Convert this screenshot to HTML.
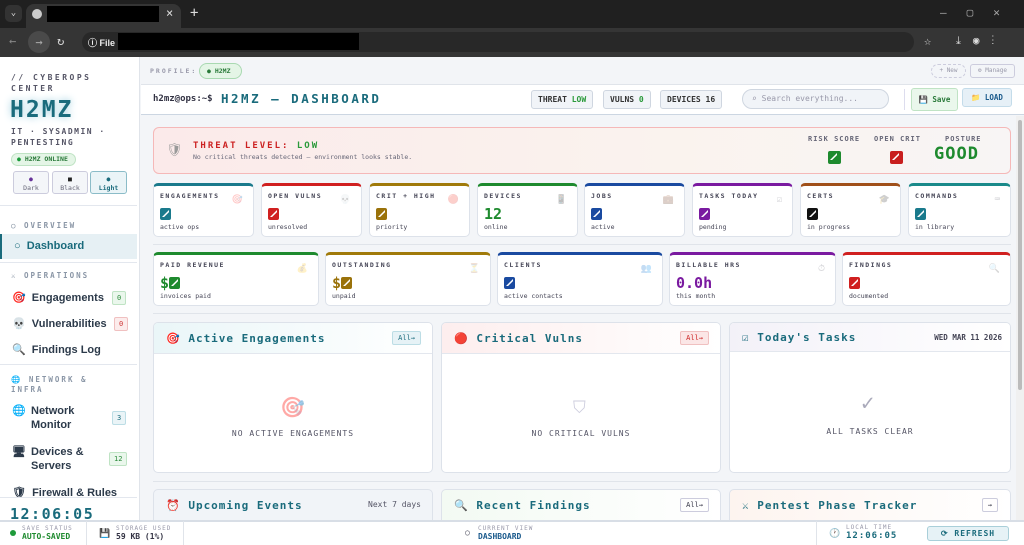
<!DOCTYPE html><html><head><meta charset="utf-8"><style>
*{box-sizing:border-box;margin:0;padding:0}
body{width:1024px;height:545px;overflow:hidden;background:#f3f5f8;font-family:"DejaVu Sans Mono","Liberation Mono",monospace;color:#334;position:relative}
.a{position:absolute}
.hd{font-family:"DejaVu Sans Mono",monospace;font-weight:bold;color:#1a6b7c;letter-spacing:1px}
.card{position:absolute;background:#fff;border:1px solid #dde2ea;border-radius:5px;border-top:3px solid}
.lbl{position:absolute;left:6px;top:6px;font-size:6.5px;letter-spacing:1.5px;color:#445;font-weight:bold}
.val{position:absolute;left:6px;top:19px;font-size:15px;font-weight:bold}
.sub{position:absolute;left:6px;top:37px;font-size:6.5px;color:#445}
.ic{position:absolute;right:10px;top:9px;font-size:9px;opacity:.25}
.box{display:inline-block;width:11px;height:12px;border-radius:2px;position:relative;top:1px}
.box:after{content:"";position:absolute;left:2px;top:2px;width:7px;height:7px;background:#fff;clip-path:polygon(0 100%,100% 0,100% 30%,30% 100%)}
.pill{position:absolute;border:1px solid #cfd6e0;border-radius:3px;background:#f1f4f8;font-size:8px;font-weight:bold;color:#333;padding:4px 6px}
.nav{position:absolute;left:0;width:138px;font-family:"Liberation Sans",sans-serif;font-weight:bold;font-size:11px;color:#2c3a4a}
.sec{position:absolute;left:11px;font-size:7.5px;letter-spacing:2px;color:#8a96a6;font-weight:bold}
.bdg{position:absolute;right:12px;font-size:7px;padding:2px 4px;border-radius:2px;border:1px solid}
.pan{position:absolute;background:#fff;border:1px solid #dde2ea;border-radius:5px;overflow:hidden}
.ph{height:31px;border-bottom:1px solid #e3e7ee;position:relative}
.pt{position:absolute;left:12px;top:9px;font-size:11px}
.emp{position:absolute;width:100%;text-align:center;font-size:8px;letter-spacing:1px;color:#556}
</style></head><body>
<!-- chrome -->
<div class="a" style="left:0;top:0;width:1024px;height:28px;background:#202020"></div>
<div class="a" style="left:5px;top:5px;width:17px;height:17px;background:#333;border-radius:5px;color:#ddd;font-size:9px;text-align:center;line-height:17px">⌄</div>
<div class="a" style="left:26px;top:4px;width:155px;height:24px;background:#353535;border-radius:8px 8px 0 0"></div>
<div class="a" style="left:32px;top:9px;width:10px;height:10px;border-radius:50%;background:#ccc"></div>
<div class="a" style="left:47px;top:6px;width:112px;height:16px;background:#000"></div>
<div class="a" style="left:166px;top:6px;color:#ddd;font-size:12px">×</div>
<div class="a" style="left:190px;top:5px;color:#ddd;font-size:14px">+</div>
<div class="a" style="left:940px;top:6px;color:#aaa;font-size:11px;letter-spacing:20px">–▢✕</div>
<div class="a" style="left:0;top:28px;width:1024px;height:29px;background:#353535"></div>
<div class="a" style="left:9px;top:34px;color:#888;font-size:12px">←</div>
<div class="a" style="left:28px;top:31px;width:22px;height:22px;border-radius:50%;background:#4a4a4a;color:#aaa;font-size:12px;text-align:center;line-height:22px">→</div>
<div class="a" style="left:57px;top:34px;color:#ddd;font-size:12px">↻</div>
<div class="a" style="left:82px;top:32px;width:832px;height:20px;border-radius:10px;background:#282828"></div>
<div class="a" style="left:88px;top:36px;color:#eee;font-size:9px;font-family:'Liberation Sans';font-weight:bold">ⓘ File</div>
<div class="a" style="left:118px;top:33px;width:241px;height:17px;background:#000"></div>
<div class="a" style="left:924px;top:34px;color:#ddd;font-size:12px">☆</div>
<div class="a" style="left:956px;top:34px;color:#ddd;font-size:11px;letter-spacing:12px">⤓◉⋮</div>
<!-- sidebar -->
<div class="a" style="left:0;top:57px;width:140px;height:463px;background:#fff;border-right:1px solid #e0e4ea"></div>
<div class="a" style="left:11px;top:72px;font-size:8px;letter-spacing:2.5px;font-weight:bold;color:#556;line-height:11px">// CYBEROPS<br>CENTER</div>
<div class="a hd" style="left:10px;top:97px;font-size:23px;letter-spacing:2px;text-shadow:0 0 8px #9cd">H2MZ</div>
<div class="a" style="left:11px;top:126px;font-size:8px;letter-spacing:1.5px;font-weight:bold;color:#556;line-height:11px">IT · SYSADMIN ·<br>PENTESTING</div>
<div class="a" style="left:11px;top:153px;width:65px;height:13px;border-radius:7px;background:#e4f5e6;border:1px solid #bfe3c4;font-size:6.5px;font-weight:bold;color:#2a7a3a;line-height:11px;padding-left:5px"><span style="color:#1a9a3a">●</span> H2MZ ONLINE</div>
<div class="a" style="left:13px;top:171px;width:36px;height:23px;border:1px solid #ccd;border-radius:3px;background:#f4f6f9;font-size:6.5px;color:#667;text-align:center;line-height:9px;padding-top:3px"><span style="color:#639">●</span><br>Dark</div>
<div class="a" style="left:52px;top:171px;width:36px;height:23px;border:1px solid #ccd;border-radius:3px;background:#f4f6f9;font-size:6.5px;color:#667;text-align:center;line-height:9px;padding-top:3px"><span style="color:#222">■</span><br>Black</div>
<div class="a" style="left:90px;top:171px;width:37px;height:23px;border:1px solid #8bbcc8;border-radius:3px;background:#eaf4f7;font-size:6.5px;color:#1a6b7c;font-weight:bold;text-align:center;line-height:9px;padding-top:3px">●<br>Light</div>
<div class="a" style="left:0;top:205px;width:137px;border-top:1px solid #e3e7ee"></div>
<div class="sec" style="top:221px">○ OVERVIEW</div>
<div class="a" style="left:0;top:234px;width:137px;height:25px;background:#e6f0f4;border-left:2px solid #1a6b7c"></div>
<div class="nav" style="top:240px;left:14px;color:#1a6b7c">○ &nbsp;Dashboard</div>
<div class="a" style="left:0;top:262px;width:137px;border-top:1px solid #e3e7ee"></div>
<div class="sec" style="top:271px">⚔ OPERATIONS</div>
<div class="nav" style="top:291px;left:12px">🎯 &nbsp;Engagements</div><div class="bdg" style="top:291px;left:112px;right:auto;color:#2a8a3a;background:#eaf7ec;border-color:#bfe3c4">0</div>
<div class="nav" style="top:317px;left:12px">💀 &nbsp;Vulnerabilities</div><div class="bdg" style="top:317px;left:114px;right:auto;color:#c33;background:#fcecec;border-color:#f0c0c0">0</div>
<div class="nav" style="top:343px;left:12px">🔍 &nbsp;Findings Log</div>
<div class="a" style="left:0;top:364px;width:137px;border-top:1px solid #e3e7ee"></div>
<div class="sec" style="top:375px;line-height:10px">🌐 NETWORK &amp;<br>INFRA</div>
<div class="nav" style="top:404px;left:12px;line-height:14px">🌐&nbsp;<span style="position:absolute;left:19px">Network<br>Monitor</span></div><div class="bdg" style="top:411px;left:112px;right:auto;color:#1a6b7c;background:#eaf4f7;border-color:#bcdde5">3</div>
<div class="nav" style="top:445px;left:12px;line-height:14px">🖥<span style="position:absolute;left:19px">Devices &amp;<br>Servers</span></div><div class="bdg" style="top:452px;left:109px;right:auto;color:#2a8a3a;background:#eaf7ec;border-color:#bfe3c4">12</div>
<div class="nav" style="top:486px;left:12px">🛡 &nbsp;Firewall &amp; Rules</div>
<div class="a" style="left:0;top:497px;width:137px;height:23px;background:#fff;border-top:1px solid #e3e7ee"></div>
<div class="a hd" style="left:10px;top:505px;font-size:15px;letter-spacing:1.5px">12:06:05</div>
<!-- main top -->
<div class="a" style="left:141px;top:57px;width:883px;height:28px;background:#f3f5f8;border-bottom:1px solid #e0e4ea"></div>
<div class="a" style="left:150px;top:67px;font-size:6.5px;letter-spacing:2px;color:#99a;font-weight:bold">PROFILE:</div>
<div class="a" style="left:199px;top:63px;width:43px;height:16px;border-radius:8px;background:#e4f5e6;border:1px solid #a9d9b1;font-size:6.5px;color:#2a7a3a;font-weight:bold;line-height:14px;padding-left:7px">● H2MZ</div>
<div class="a" style="left:931px;top:64px;width:35px;height:14px;border:1px dashed #ccd;border-radius:7px;font-size:6px;color:#99a;text-align:center;line-height:12px">+ New</div>
<div class="a" style="left:970px;top:64px;width:45px;height:14px;border:1px solid #ccd;border-radius:3px;font-size:6px;color:#99a;text-align:center;line-height:12px">⚙ Manage</div>
<div class="a" style="left:141px;top:85px;width:883px;height:30px;background:#fff;border-bottom:1px solid #ccd6e2"></div>
<div class="a" style="left:153px;top:94px;font-size:9px;font-weight:bold;color:#334">h2mz@ops:~$</div>
<div class="a hd" style="left:221px;top:91px;font-size:12.5px;letter-spacing:2.5px">H2MZ — DASHBOARD</div>
<div class="pill" style="left:531px;top:90px">THREAT <span style="color:#2a9a3a">LOW</span></div>
<div class="pill" style="left:603px;top:90px">VULNS <span style="color:#2a9a3a">0</span></div>
<div class="pill" style="left:660px;top:90px">DEVICES 16</div>
<div class="a" style="left:742px;top:89px;width:147px;height:20px;border:1px solid #cfd6e0;border-radius:10px;background:#f1f4f8;font-size:8px;color:#99a;line-height:18px;padding-left:9px">⌕ Search everything...</div>
<div class="a" style="left:904px;top:89px;height:21px;border-left:1px solid #dde"></div>
<div class="a" style="left:911px;top:88px;width:47px;height:23px;border:1px solid #bfe3c4;border-radius:3px;background:#eaf7ec;font-size:7.5px;color:#2a7a3a;font-weight:bold;line-height:21px;text-align:center">💾 Save</div>
<div class="a" style="left:962px;top:88px;width:50px;height:19px;border:1px solid #c4dcea;border-radius:3px;background:#e6f0f7;font-size:7.5px;color:#1a5a8c;font-weight:bold;line-height:17px;text-align:center">📁 LOAD</div>
<!-- scrollbar -->
<div class="a" style="left:1016px;top:116px;width:8px;height:404px;background:#f0f0f0"></div>
<div class="a" style="left:1018px;top:120px;width:4px;height:270px;background:#bbb;border-radius:2px"></div>
<!-- threat -->
<div class="a" style="left:153px;top:127px;width:858px;height:47px;border:1px solid #f5b8b8;border-radius:6px;background:linear-gradient(90deg,#fbeaea,#faf3ee 60%,#f8f5f5)"></div>
<div class="a" style="left:166px;top:143px;font-size:13px;color:#999">🛡</div>
<div class="a" style="left:193px;top:141px;font-size:9px;font-weight:bold;letter-spacing:2px;color:#c22">THREAT LEVEL: <span style="color:#2a9a3a">LOW</span></div>
<div class="a" style="left:193px;top:153px;font-size:6.5px;color:#667">No critical threats detected — environment looks stable.</div>
<div class="a" style="left:808px;top:135px;font-size:7px;letter-spacing:1px;color:#667;font-weight:bold">RISK SCORE</div>
<div class="a" style="left:874px;top:135px;font-size:7px;letter-spacing:1px;color:#667;font-weight:bold">OPEN CRIT</div>
<div class="a" style="left:945px;top:135px;font-size:7px;letter-spacing:1px;color:#667;font-weight:bold">POSTURE</div>
<div class="a" style="left:828px;top:148px"><span class="box" style="width:13px;height:13px;background:#1e8a2e"></span></div>
<div class="a" style="left:890px;top:148px"><span class="box" style="width:13px;height:13px;background:#c81e1e"></span></div>
<div class="a" style="left:934px;top:144px;font-size:17px;font-weight:bold;color:#1e8a2e;letter-spacing:1px">GOOD</div>
<!-- stats row1 -->
<div class="card" style="left:153px;top:183px;width:101px;height:54px;border-top-color:#1a7a8c"><div class="lbl">ENGAGEMENTS</div><div class="val"><span class="box" style="background:#1a7a8c"></span></div><div class="sub">active ops</div><div class="ic">🎯</div></div>
<div class="card" style="left:261px;top:183px;width:101px;height:54px;border-top-color:#d02020"><div class="lbl">OPEN VULNS</div><div class="val"><span class="box" style="background:#d02020"></span></div><div class="sub">unresolved</div><div class="ic">💀</div></div>
<div class="card" style="left:369px;top:183px;width:101px;height:54px;border-top-color:#a07a0a"><div class="lbl">CRIT + HIGH</div><div class="val"><span class="box" style="background:#9a720a"></span></div><div class="sub">priority</div><div class="ic">🔴</div></div>
<div class="card" style="left:477px;top:183px;width:101px;height:54px;border-top-color:#1e8a2e"><div class="lbl">DEVICES</div><div class="val" style="color:#1e8a2e">12</div><div class="sub">online</div><div class="ic">📱</div></div>
<div class="card" style="left:584px;top:183px;width:101px;height:54px;border-top-color:#1a4aa0"><div class="lbl">JOBS</div><div class="val"><span class="box" style="background:#1a4aa0"></span></div><div class="sub">active</div><div class="ic">💼</div></div>
<div class="card" style="left:692px;top:183px;width:101px;height:54px;border-top-color:#7a1aa0"><div class="lbl">TASKS TODAY</div><div class="val"><span class="box" style="background:#7a1aa0"></span></div><div class="sub">pending</div><div class="ic">☑</div></div>
<div class="card" style="left:800px;top:183px;width:101px;height:54px;border-top-color:#a0501a"><div class="lbl">CERTS</div><div class="val"><span class="box" style="background:#111"></span></div><div class="sub">in progress</div><div class="ic">🎓</div></div>
<div class="card" style="left:908px;top:183px;width:103px;height:54px;border-top-color:#1a8a8a"><div class="lbl">COMMANDS</div><div class="val"><span class="box" style="background:#1a7a8c"></span></div><div class="sub">in library</div><div class="ic">⌨</div></div>
<div class="a" style="left:153px;top:244px;width:858px;border-top:1px solid #e0e4ea"></div>
<!-- stats row2 -->
<div class="card" style="left:153px;top:252px;width:166px;height:54px;border-top-color:#1e8a2e"><div class="lbl">PAID REVENUE</div><div class="val" style="color:#1e8a2e">$<span class="box" style="background:#1e8a2e"></span></div><div class="sub">invoices paid</div><div class="ic">💰</div></div>
<div class="card" style="left:325px;top:252px;width:166px;height:54px;border-top-color:#a07a0a"><div class="lbl">OUTSTANDING</div><div class="val" style="color:#9a720a">$<span class="box" style="background:#9a720a"></span></div><div class="sub">unpaid</div><div class="ic">⏳</div></div>
<div class="card" style="left:497px;top:252px;width:166px;height:54px;border-top-color:#1a4aa0"><div class="lbl">CLIENTS</div><div class="val"><span class="box" style="background:#1a4aa0"></span></div><div class="sub">active contacts</div><div class="ic">👥</div></div>
<div class="card" style="left:669px;top:252px;width:167px;height:54px;border-top-color:#7a1aa0"><div class="lbl">BILLABLE HRS</div><div class="val" style="color:#7a1aa0">0.0h</div><div class="sub">this month</div><div class="ic">⏱</div></div>
<div class="card" style="left:842px;top:252px;width:169px;height:54px;border-top-color:#d02020"><div class="lbl">FINDINGS</div><div class="val"><span class="box" style="background:#d02020"></span></div><div class="sub">documented</div><div class="ic">🔍</div></div>
<div class="a" style="left:153px;top:313px;width:858px;border-top:1px solid #e0e4ea"></div>
<!-- panels -->
<div class="pan" style="left:153px;top:322px;width:280px;height:151px"><div class="ph" style="background:linear-gradient(90deg,#eaf6f8,#fff)"><div class="pt hd">🎯 Active Engagements</div><div class="a" style="right:11px;top:8px;font-size:7px;padding:2px 5px;border:1px solid #bcdde5;background:#e6f2f6;border-radius:2px;color:#1a6b7c">All→</div></div><div class="a" style="left:126px;top:72px;font-size:20px;opacity:.4">🎯</div><div class="emp" style="top:106px">NO ACTIVE ENGAGEMENTS</div></div>
<div class="pan" style="left:441px;top:322px;width:280px;height:151px"><div class="ph" style="background:linear-gradient(90deg,#fdeeee,#fff)"><div class="pt hd">🔴 Critical Vulns</div><div class="a" style="right:11px;top:8px;font-size:7px;padding:2px 5px;border:1px solid #f0c0c0;background:#fbe6e6;border-radius:2px;color:#c22">All→</div></div><div class="a" style="left:131px;top:75px;font-size:17px;color:#ccd">⛉</div><div class="emp" style="top:106px">NO CRITICAL VULNS</div></div>
<div class="pan" style="left:729px;top:322px;width:282px;height:151px"><div class="ph" style="height:29px;background:linear-gradient(90deg,#f3f1f8,#fff)"><div class="pt hd" style="top:8px">☑ Today's Tasks</div><div class="a" style="right:8px;top:10px;font-size:7.5px;font-weight:bold;color:#445">WED MAR 11 2026</div></div><div class="a" style="left:131px;top:68px;font-size:22px;color:#aab">✓</div><div class="emp" style="top:104px">ALL TASKS CLEAR</div></div>
<div class="a" style="left:153px;top:481px;width:858px;border-top:1px solid #e0e4ea"></div>
<div class="pan" style="left:153px;top:489px;width:280px;height:40px;background:#f1f4f8"><div class="ph"><div class="pt hd" style="top:9px">⏰ Upcoming Events</div><div class="a" style="right:11px;top:10px;font-size:8px;color:#556">Next 7 days</div></div></div>
<div class="pan" style="left:441px;top:489px;width:280px;height:40px;background:linear-gradient(90deg,#f3faf3,#fff)"><div class="ph"><div class="pt hd" style="top:9px">🔍 Recent Findings</div><div class="a" style="right:11px;top:8px;font-size:7px;padding:2px 5px;border:1px solid #ccd;border-radius:2px;color:#334">All→</div></div></div>
<div class="pan" style="left:729px;top:489px;width:282px;height:40px;background:linear-gradient(90deg,#fdf4ef,#fff)"><div class="ph"><div class="pt hd" style="top:9px">⚔ Pentest Phase Tracker</div><div class="a" style="right:12px;top:8px;font-size:7px;padding:2px 5px;border:1px solid #ccd;border-radius:2px;color:#334">→</div></div></div>
<!-- status bar -->
<div class="a" style="left:0;top:520px;width:1024px;height:25px;background:#fff;border-top:2px solid #d8dee6"></div>
<div class="a" style="left:10px;top:530px;width:6px;height:6px;border-radius:50%;background:#1e9a3a"></div>
<div class="a" style="left:22px;top:525px;font-size:6px;letter-spacing:1px;color:#99a">SAVE STATUS</div>
<div class="a" style="left:22px;top:532px;font-size:8px;font-weight:bold;color:#1e8a2e">AUTO-SAVED</div>
<div class="a" style="left:86px;top:521px;height:24px;border-left:1px solid #e0e4ea"></div>
<div class="a" style="left:99px;top:529px;font-size:9px">💾</div>
<div class="a" style="left:116px;top:525px;font-size:6px;letter-spacing:1px;color:#99a">STORAGE USED</div>
<div class="a" style="left:116px;top:532px;font-size:8px;font-weight:bold;color:#334">59 KB (1%)</div>
<div class="a" style="left:183px;top:521px;height:24px;border-left:1px solid #e0e4ea"></div>
<div class="a" style="left:465px;top:528px;font-size:8px;color:#445">○</div>
<div class="a" style="left:478px;top:525px;font-size:6px;letter-spacing:1px;color:#99a">CURRENT VIEW</div>
<div class="a" style="left:478px;top:532px;font-size:8px;font-weight:bold;color:#1a5a8c">DASHBOARD</div>
<div class="a" style="left:540px;top:521px"></div>
<div class="a" style="left:816px;top:521px;height:24px;border-left:1px solid #e0e4ea"></div>
<div class="a" style="left:829px;top:529px;font-size:9px">🕐</div>
<div class="a" style="left:846px;top:524px;font-size:6px;letter-spacing:1px;color:#99a">LOCAL TIME</div>
<div class="a" style="left:846px;top:531px;font-size:9px;font-weight:bold;color:#1a6b7c;letter-spacing:1px">12:06:05</div>
<div class="a" style="left:927px;top:526px;width:82px;height:15px;border:1px solid #a9cfd9;border-radius:3px;background:#e6f2f6;font-size:8px;font-weight:bold;color:#1a6b7c;text-align:center;line-height:13px;letter-spacing:1px">⟳ REFRESH</div>
</body></html>
